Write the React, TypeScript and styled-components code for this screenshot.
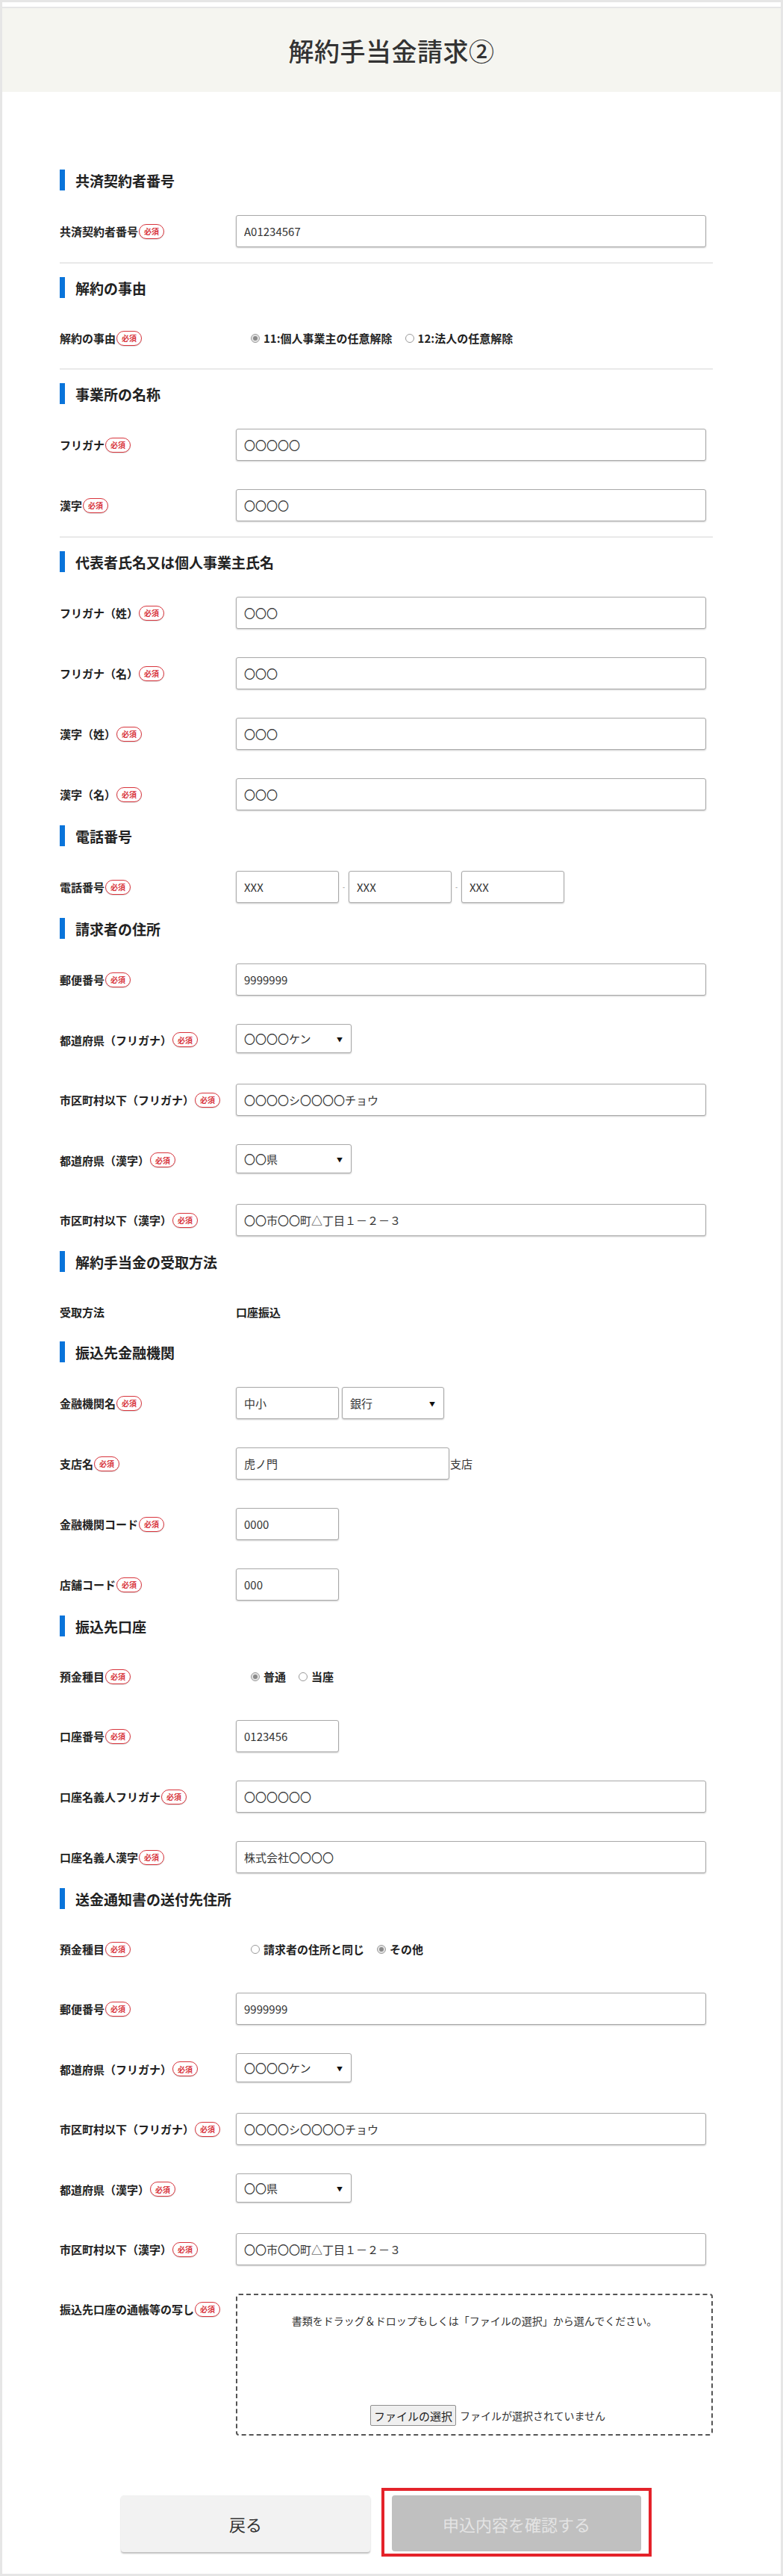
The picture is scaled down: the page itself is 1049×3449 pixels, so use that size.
import React from "react";
import styled, { createGlobalStyle } from "styled-components";

const Global = createGlobalStyle`
  html, body { margin: 0; padding: 0; background: #fff; }
  body { font-family: "Noto Sans CJK JP", "Noto Sans", sans-serif; color: #333; }
  * { box-sizing: border-box; }
`;

const Page = styled.div`
  width: 1049px;
  min-height: 3449px;
  border: 3px solid #e6e6e6;
  padding-top: 6px;
  background: #fff;
`;

const Header = styled.header`
  height: 114px;
  border-top: 2px solid #e6e6e6;
  background: #f5f5f0;
  display: flex;
  align-items: center;
  justify-content: center;
`;

const Title = styled.h1`
  margin: 0;
  font-size: 34px;
  font-weight: 500;
  color: #333;
  letter-spacing: 0.5px;
`;

const Main = styled.main`
  padding: 104px 91px 22px 77px;
`;

const Section = styled.section<{ $divider?: boolean }>`
  display: flex;
  flex-direction: column;
  padding-bottom: 20px;
  ${(p) => (p.$divider ? "border-bottom: 2px solid #e9e9e9; margin-bottom: 18px;" : "")}
`;

const Heading = styled.h2`
  margin: 0 0 33px;
  height: 28px;
  display: flex;
  align-items: center;
  gap: 14px;
  font-size: 19px;
  font-weight: 700;
  color: #222;
  &::before {
    content: "";
    width: 7px;
    height: 28px;
    background: #0a74da;
  }
`;

const Rows = styled.div`
  display: flex;
  flex-direction: column;
  gap: 38px;
`;

const Row = styled.div<{ $top?: boolean }>`
  display: flex;
  align-items: ${(p) => (p.$top ? "flex-start" : "center")};
`;

const Label = styled.div<{ $top?: boolean }>`
  width: 236px;
  flex-shrink: 0;
  display: flex;
  align-items: center;
  font-size: 15px;
  font-weight: 700;
  color: #222;
  white-space: nowrap;
  ${(p) => (p.$top ? "padding-top: 10px;" : "")}
`;

const Badge = styled.span`
  display: inline-flex;
  align-items: center;
  justify-content: center;
  height: 20px;
  padding: 0 6px;
  margin-left: 1px;
  border: 1.5px solid #d8343c;
  border-radius: 10px;
  color: #d8343c;
  font-size: 10px;
  font-weight: 700;
  background: #fff;
  box-shadow: 0 1px 1px rgba(0, 0, 0, 0.15);
`;

const Field = styled.div<{ $pad?: number; $h?: number }>`
  flex: 1;
  display: flex;
  align-items: center;
  padding-left: ${(p) => p.$pad ?? 0}px;
  min-height: ${(p) => p.$h ?? 0}px;
`;

const TextInput = styled.input<{ $w?: number }>`
  width: ${(p) => p.$w ?? 630}px;
  height: 43px;
  padding: 0 10px;
  border: 1px solid #a9a9a9;
  border-radius: 3px;
  box-shadow: 0 1px 2px rgba(0, 0, 0, 0.2);
  font-family: inherit;
  font-size: 15px;
  color: #333;
  background: #fff;
  outline: none;
`;

const SelectWrap = styled.div<{ $w?: number; $gapBelow?: number }>`
  position: relative;
  width: ${(p) => p.$w ?? 155}px;
  margin-bottom: ${(p) => p.$gapBelow ?? 0}px;
`;

const Select = styled.select<{ $h?: number }>`
  appearance: none;
  -webkit-appearance: none;
  width: 100%;
  height: ${(p) => p.$h ?? 39}px;
  padding: 0 24px 0 10px;
  border: 1px solid #a9a9a9;
  border-radius: 3px;
  box-shadow: 0 1px 2px rgba(0, 0, 0, 0.2);
  font-family: inherit;
  font-size: 15px;
  color: #333;
  background: #fff;
  outline: none;
`;

const Arrow = styled.span`
  position: absolute;
  right: 12px;
  top: 50%;
  transform: translateY(-50%);
  font-size: 8px;
  color: #111;
  pointer-events: none;
`;

const Sep = styled.span<{ $w?: number }>`
  width: ${(p) => p.$w ?? 13}px;
  text-align: center;
  font-size: 9px;
  color: #888;
`;

const Suffix = styled.span`
  font-size: 15px;
  margin-left: 1px;
`;

const Value = styled.span`
  font-size: 15px;
  font-weight: 700;
  color: #222;
`;

const RadioGroup = styled.div`
  display: flex;
  align-items: center;
  gap: 17px;
`;

const RadioItem = styled.label`
  display: flex;
  align-items: center;
  gap: 5px;
  font-size: 15px;
  font-weight: 700;
  color: #222;
`;

const RadioDot = styled.span<{ $on?: boolean }>`
  width: 12px;
  height: 12px;
  border-radius: 50%;
  border: 1px solid #9a9a9a;
  background: ${(p) => (p.$on ? "#e4e4e4" : "#fff")};
  display: inline-flex;
  align-items: center;
  justify-content: center;
  &::after {
    content: "";
    width: 6px;
    height: 6px;
    border-radius: 50%;
    background: ${(p) => (p.$on ? "#8a8a8a" : "transparent")};
  }
`;

const DropBox = styled.div`
  width: 639px;
  height: 190px;
  border: 2px dashed #555;
  border-radius: 4px;
  display: flex;
  flex-direction: column;
  align-items: center;
  justify-content: space-between;
  padding: 24px 0 11px;
`;

const DropText = styled.p`
  margin: 0;
  font-size: 14px;
  color: #333;
`;

const FileLine = styled.div`
  display: flex;
  align-items: center;
  gap: 5px;
  margin-left: 36px;
  font-size: 14px;
  color: #333;
`;

const FileButton = styled.button`
  height: 28px;
  padding: 0 4px;
  border: 1px solid #8f8f8f;
  border-radius: 2px;
  background: #efefef;
  font-family: inherit;
  font-size: 15px;
  color: #222;
`;

const Buttons = styled.div`
  display: flex;
  justify-content: center;
  align-items: center;
  gap: 15px;
  margin-top: 50px;
`;

const BackButton = styled.button`
  width: 334px;
  height: 76px;
  border: none;
  border-radius: 4px;
  background: #f2f2f2;
  box-shadow: 0 2px 2px rgba(0, 0, 0, 0.25);
  font-family: inherit;
  font-size: 22px;
  color: #333;
  margin-top: 4px;
`;

const Highlight = styled.div`
  border: 4px solid #e4222a;
  padding: 6px 10px 3px;
`;

const ConfirmButton = styled.button`
  width: 334px;
  height: 75px;
  border: none;
  border-radius: 4px;
  background: #c0c0c0;
  font-family: inherit;
  font-size: 22px;
  color: #e4e4e4;
`;

type FieldDef =
  | { kind: "text"; label: string; value: string; w?: number; req?: boolean; suffix?: string }
  | { kind: "select"; label: string; value: string; req?: boolean }
  | { kind: "radio"; label: string; options: string[]; on: number; req?: boolean }
  | { kind: "static"; label: string; value: string }
  | { kind: "phone"; label: string }
  | { kind: "bank"; label: string }
  | { kind: "file"; label: string };

type SectionDef = { title: string; divider?: boolean; fields: FieldDef[] };

const sections: SectionDef[] = [
  {
    title: "共済契約者番号",
    divider: true,
    fields: [{ kind: "text", label: "共済契約者番号", value: "A01234567", req: true }],
  },
  {
    title: "解約の事由",
    divider: true,
    fields: [
      { kind: "radio", label: "解約の事由", options: ["11:個人事業主の任意解除", "12:法人の任意解除"], on: 0, req: true },
    ],
  },
  {
    title: "事業所の名称",
    divider: true,
    fields: [
      { kind: "text", label: "フリガナ", value: "〇〇〇〇〇", req: true },
      { kind: "text", label: "漢字", value: "〇〇〇〇", req: true },
    ],
  },
  {
    title: "代表者氏名又は個人事業主氏名",
    fields: [
      { kind: "text", label: "フリガナ（姓）", value: "〇〇〇", req: true },
      { kind: "text", label: "フリガナ（名）", value: "〇〇〇", req: true },
      { kind: "text", label: "漢字（姓）", value: "〇〇〇", req: true },
      { kind: "text", label: "漢字（名）", value: "〇〇〇", req: true },
    ],
  },
  { title: "電話番号", fields: [{ kind: "phone", label: "電話番号" }] },
  {
    title: "請求者の住所",
    fields: [
      { kind: "text", label: "郵便番号", value: "9999999", req: true },
      { kind: "select", label: "都道府県（フリガナ）", value: "〇〇〇〇ケン", req: true },
      { kind: "text", label: "市区町村以下（フリガナ）", value: "〇〇〇〇シ〇〇〇〇チョウ", req: true },
      { kind: "select", label: "都道府県（漢字）", value: "〇〇県", req: true },
      { kind: "text", label: "市区町村以下（漢字）", value: "〇〇市〇〇町△丁目１－２－３", req: true },
    ],
  },
  { title: "解約手当金の受取方法", fields: [{ kind: "static", label: "受取方法", value: "口座振込" }] },
  {
    title: "振込先金融機関",
    fields: [
      { kind: "bank", label: "金融機関名" },
      { kind: "text", label: "支店名", value: "虎ノ門", w: 286, req: true, suffix: "支店" },
      { kind: "text", label: "金融機関コード", value: "0000", w: 138, req: true },
      { kind: "text", label: "店舗コード", value: "000", w: 138, req: true },
    ],
  },
  {
    title: "振込先口座",
    fields: [
      { kind: "radio", label: "預金種目", options: ["普通", "当座"], on: 0, req: true },
      { kind: "text", label: "口座番号", value: "0123456", w: 138, req: true },
      { kind: "text", label: "口座名義人フリガナ", value: "〇〇〇〇〇〇", req: true },
      { kind: "text", label: "口座名義人漢字", value: "株式会社〇〇〇〇", req: true },
    ],
  },
  {
    title: "送金通知書の送付先住所",
    fields: [
      { kind: "radio", label: "預金種目", options: ["請求者の住所と同じ", "その他"], on: 1, req: true },
      { kind: "text", label: "郵便番号", value: "9999999", req: true },
      { kind: "select", label: "都道府県（フリガナ）", value: "〇〇〇〇ケン", req: true },
      { kind: "text", label: "市区町村以下（フリガナ）", value: "〇〇〇〇シ〇〇〇〇チョウ", req: true },
      { kind: "select", label: "都道府県（漢字）", value: "〇〇県", req: true },
      { kind: "text", label: "市区町村以下（漢字）", value: "〇〇市〇〇町△丁目１－２－３", req: true },
      { kind: "file", label: "振込先口座の通帳等の写し" },
    ],
  },
];

const SelectBox: React.FC<{ value: string; w?: number; h?: number; gapBelow?: number }> = ({
  value,
  w,
  h,
  gapBelow,
}) => (
  <SelectWrap $w={w} $gapBelow={gapBelow}>
    <Select $h={h} value={value} onChange={() => {}}>
      <option value={value}>{value}</option>
    </Select>
    <Arrow>▼</Arrow>
  </SelectWrap>
);

const renderField = (f: FieldDef) => {
  switch (f.kind) {
    case "text":
      return (
        <Field>
          <TextInput $w={f.w} value={f.value} readOnly />
          {f.suffix && <Suffix>{f.suffix}</Suffix>}
        </Field>
      );
    case "select":
      return (
        <Field>
          <SelectBox value={f.value} gapBelow={3} />
        </Field>
      );
    case "radio":
      return (
        <Field $pad={20} $h={41}>
          <RadioGroup>
            {f.options.map((o, i) => (
              <RadioItem key={o}>
                <RadioDot $on={i === f.on} />
                {o}
              </RadioItem>
            ))}
          </RadioGroup>
        </Field>
      );
    case "static":
      return (
        <Field $h={40}>
          <Value>{f.value}</Value>
        </Field>
      );
    case "phone":
      return (
        <Field>
          <TextInput $w={138} value="XXX" readOnly />
          <Sep>-</Sep>
          <TextInput $w={138} value="XXX" readOnly />
          <Sep>-</Sep>
          <TextInput $w={138} value="XXX" readOnly />
        </Field>
      );
    case "bank":
      return (
        <Field>
          <TextInput $w={138} value="中小" readOnly />
          <Sep $w={4} />
          <SelectBox value="銀行" w={137} h={43} />
        </Field>
      );
    case "file":
      return (
        <Field>
          <DropBox>
            <DropText>書類をドラッグ＆ドロップもしくは「ファイルの選択」から選んでください。</DropText>
            <FileLine>
              <FileButton type="button">ファイルの選択</FileButton>
              <span>ファイルが選択されていません</span>
            </FileLine>
          </DropBox>
        </Field>
      );
  }
};

const hasReq = (f: FieldDef) =>
  f.kind === "phone" || f.kind === "bank" || f.kind === "file" || ("req" in f && !!f.req);

export default function App() {
  return (
    <>
      <Global />
      <Page>
        <Header>
          <Title>解約手当金請求②</Title>
        </Header>
        <Main>
          {sections.map((s) => (
            <Section key={s.title} $divider={s.divider}>
              <Heading>{s.title}</Heading>
              <Rows>
                {s.fields.map((f, i) => (
                  <Row key={i} $top={f.kind === "file"}>
                    <Label $top={f.kind === "file"}>
                      {f.label}
                      {hasReq(f) && <Badge>必須</Badge>}
                    </Label>
                    {renderField(f)}
                  </Row>
                ))}
              </Rows>
            </Section>
          ))}
          <Buttons>
            <BackButton type="button">戻る</BackButton>
            <Highlight>
              <ConfirmButton type="button">申込内容を確認する</ConfirmButton>
            </Highlight>
          </Buttons>
        </Main>
      </Page>
    </>
  );
}
